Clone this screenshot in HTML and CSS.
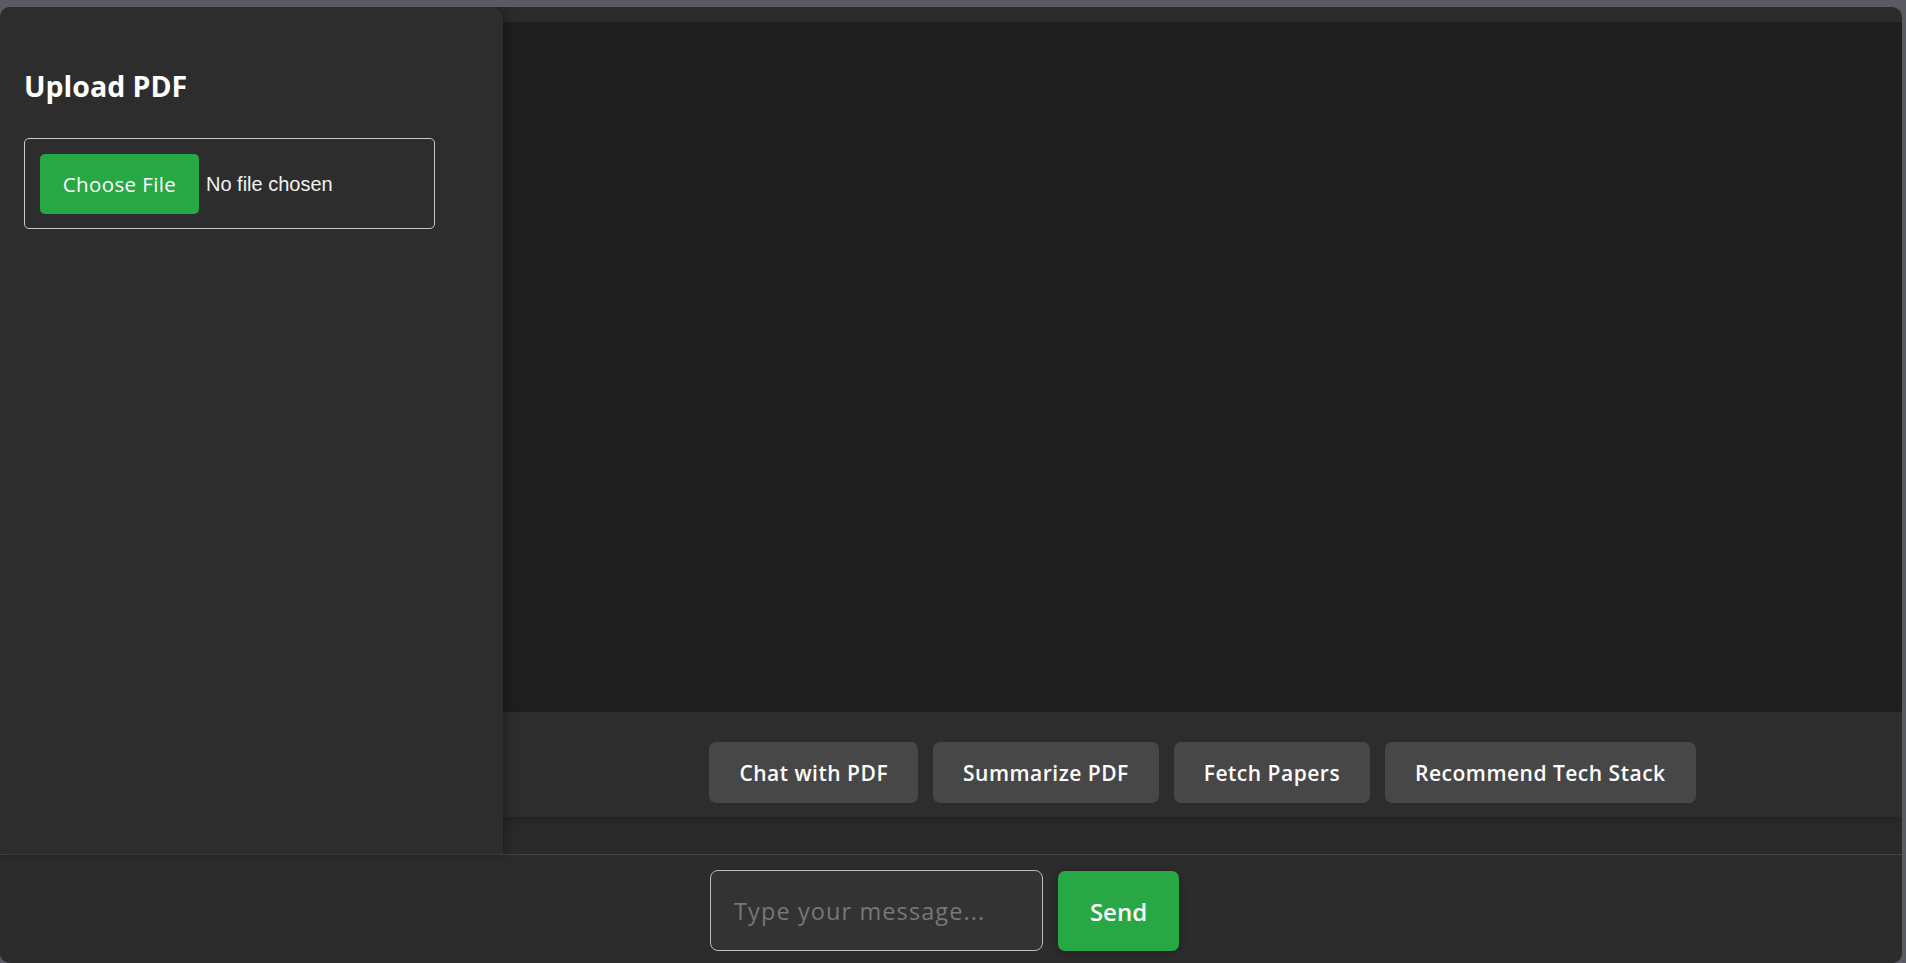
FILE: index.html
```html
<!DOCTYPE html>
<html lang="en">
<head>
<meta charset="utf-8">
<title>PDF Assistant</title>
<link rel="stylesheet" href="styles.css">
</head>
<body>
<div class="app">
  <div class="top">
    <aside class="sidebar">
      <h2 class="sidebar-title">Upload PDF</h2>
      <div class="file-box">
        <span class="file-btn">Choose File</span>
        <span class="file-name">No file chosen</span>
      </div>
    </aside>
    <main class="main">
      <div class="chat"></div>
      <div class="actions">
        <button class="action">Chat with PDF</button>
        <button class="action">Summarize PDF</button>
        <button class="action">Fetch Papers</button>
        <button class="action">Recommend Tech Stack</button>
      </div>
      <div class="spacer"></div>
    </main>
  </div>
  <div class="bottom">
    <input class="msg" type="text" placeholder="Type your message...">
    <button class="send">Send</button>
  </div>
</div>
</body>
</html>
```
FILE: styles.css
```css
* { box-sizing: border-box; }
html, body { margin: 0; height: 100%; }
body {
  background: #5a5b61;
  padding: 7px 4px 0 0;
  overflow: hidden;
  font-family: "Poppins", "Open Sans", sans-serif;
  color: #fff;
}
.app {
  height: 956px;
  background: #2b2b2b;
  border-radius: 10px;
  overflow: hidden;
  display: flex;
  flex-direction: column;
}
.top {
  height: 847px;
  display: flex;
}
.sidebar {
  width: 503px;
  flex: none;
  background: #2d2d2d;
  border-radius: 10px 12px 0 0;
  box-shadow: 2px 0 12px rgba(0,0,0,0.35);
  padding: 0 24px;
  position: relative;
  z-index: 1;
}
.sidebar-title {
  margin: 61px 0 34px;
  font-family: "Open Sans", sans-serif;
  font-size: 28.5px;
  line-height: 36px;
  font-weight: 700;
  letter-spacing: 0;
}
.file-box {
  width: 411px;
  height: 91px;
  border: 1px solid #c8c8c8;
  border-radius: 5px;
  padding: 15px 15px 14px;
  display: flex;
  align-items: center;
}
.file-btn {
  width: 159px;
  height: 60px;
  background: #28a745;
  border-radius: 5px;
  display: flex;
  align-items: center;
  justify-content: center;
  font-family: "Open Sans", sans-serif;
  font-size: 20.5px;
  letter-spacing: 0.4px;
  color: #fff;
}
.file-name {
  margin-left: 7px;
  font-family: "Liberation Sans", Arial, sans-serif;
  font-size: 20px;
  color: #f2f2f2;
}
.main {
  flex: 1;
  display: flex;
  flex-direction: column;
  padding-top: 15px;
  min-width: 0;
}
.chat {
  flex: 1;
  background: #1f1f1f;
}
.actions {
  height: 105px;
  background: #2d2d2d;
  padding: 30px 0 14px;
  display: flex;
  justify-content: center;
  align-items: flex-start;
  gap: 15px;
  box-shadow: 0 4px 10px rgba(0,0,0,0.18);
  position: relative;
}
.action {
  height: 61px;
  padding: 0 30px;
  background: #474747;
  border: none;
  border-radius: 7px;
  color: #fff;
  font-family: "Open Sans", sans-serif;
  font-size: 21px;
  font-weight: 600;
  letter-spacing: 0.5px;
}
.spacer {
  height: 37px;
  background: #2a2a2a;
}
.bottom {
  flex: 1;
  background: #2c2c2c;
  border-top: 1px solid #444;
  padding: 15px 13px 0 0;
  display: flex;
  justify-content: center;
  align-items: flex-start;
  gap: 15px;
}
.msg {
  width: 333px;
  height: 81px;
  background: #333;
  border: 1px solid #bdbdbd;
  border-radius: 8px;
  padding: 0 23px;
  font-family: "Open Sans", sans-serif;
  font-size: 23.5px;
  letter-spacing: 1.1px;
  color: #fff;
  outline: none;
}
.msg::placeholder { color: #777; }
.send {
  width: 121px;
  height: 80px;
  margin-top: 1px;
  background: #28a745;
  border: none;
  border-radius: 7px;
  color: #fff;
  font-family: "Open Sans", sans-serif;
  font-size: 24px;
  font-weight: 600;
  box-shadow: 0 2px 8px rgba(0,0,0,0.25);
}
```
